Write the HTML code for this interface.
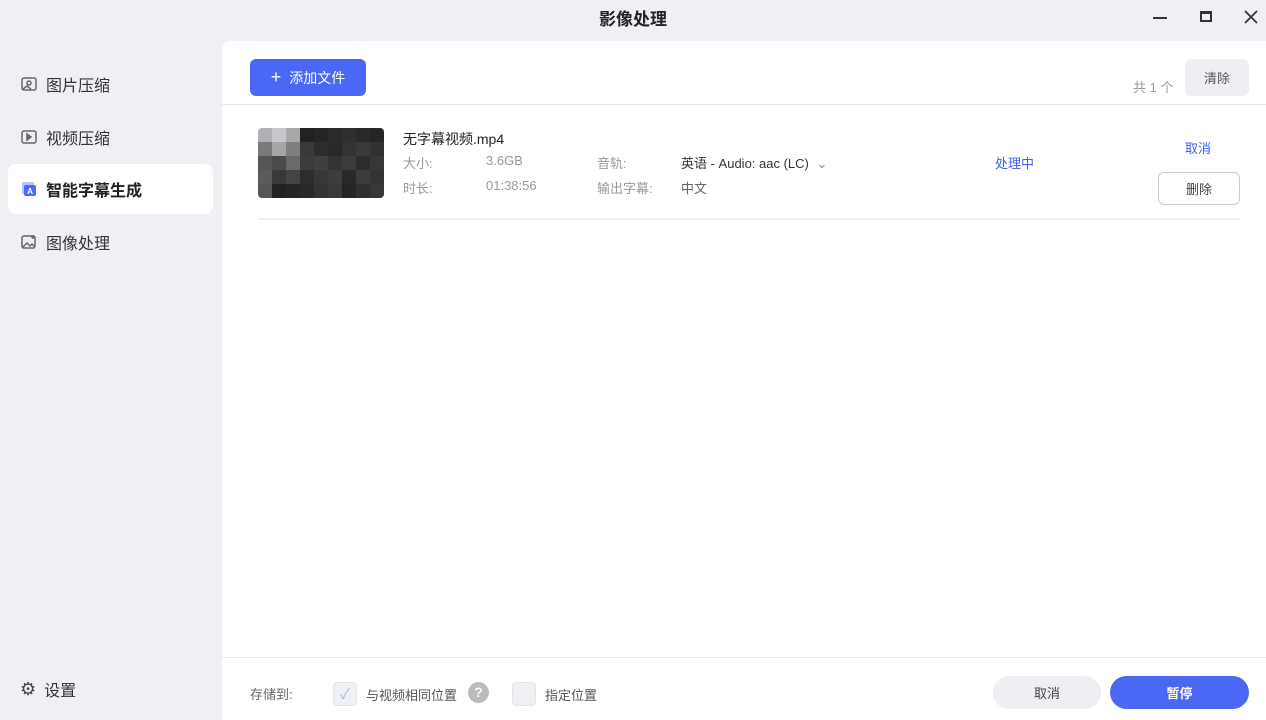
<!DOCTYPE html>
<html><head><meta charset="utf-8"><style>
*{margin:0;padding:0;box-sizing:border-box}
body{width:1266px;height:720px;background:#eff0f4;font-family:"Liberation Sans","Noto Sans CJK SC",sans-serif;position:relative;overflow:hidden;color:#222}
.abs{position:absolute}
.title{top:5px;left:0;width:1266px;text-align:center;font-size:17px;font-weight:bold;color:#222}
.nav{left:20px;font-size:16px;color:#333;display:flex;align-items:center;gap:8px}
.main{left:222px;top:41px;width:1044px;height:679px;background:#fff;border-radius:8px 0 0 0}
.g{color:#999;font-size:13px}
.d{color:#333;font-size:13px}
.btn{border-radius:6px;font-size:13px;display:flex;align-items:center;justify-content:center}
.thumb{left:258px;top:128px;width:126px;height:70px;display:grid;grid-template-columns:repeat(9,1fr);grid-template-rows:repeat(5,1fr);border-radius:4px;overflow:hidden}
</style></head><body>
<div class="abs title">影像处理</div>
<div class="abs" style="left:1153px;top:17px;width:14px;height:2px;background:#333"></div>
<div class="abs" style="left:1200px;top:11px;width:12px;height:11px;border:2px solid #333;border-top-width:3px"></div>
<svg class="abs" style="left:1244px;top:10px" width="14" height="14" viewBox="0 0 14 14" stroke="#333" stroke-width="1.8"><path d="M1 1l12 12M13 1L1 13"/></svg>

<div class="abs nav" style="top:72px"><svg width="18" height="18" viewBox="0 0 18 18" fill="none" stroke="#666" stroke-width="1.5"><rect x="2" y="3" width="14" height="12" rx="2"/><circle cx="9" cy="8" r="2"/><path d="M3 14l4-3 4 3"/></svg>图片压缩</div>
<div class="abs nav" style="top:125px"><svg width="18" height="18" viewBox="0 0 18 18" fill="none" stroke="#666" stroke-width="1.5"><rect x="2" y="3" width="14" height="12" rx="2"/><path d="M7 6v6l4-3z" fill="#666"/></svg>视频压缩</div>
<div class="abs" style="left:8px;top:164px;width:205px;height:50px;background:#fff;border-radius:8px"></div>
<div class="abs nav" style="top:177px;font-weight:bold;color:#222"><svg width="18" height="18" viewBox="0 0 18 18"><rect x="2" y="2" width="12" height="12" rx="2" fill="#b8c4f8"/><rect x="4" y="5" width="12" height="11" rx="2" fill="#4d6af5"/><text x="10" y="14" font-size="8" fill="#fff" text-anchor="middle" font-family="Liberation Sans">A</text></svg>智能字幕生成</div>
<div class="abs nav" style="top:230px"><svg width="18" height="18" viewBox="0 0 18 18" fill="none" stroke="#666" stroke-width="1.5"><rect x="2" y="3" width="13" height="12" rx="2"/><path d="M3 14l4-4 3 3 2-2 3 3"/><path d="M13 2v4M11 4h4"/></svg>图像处理</div>
<div class="abs nav" style="top:677px"><span style="font-size:18px;color:#444">⚙</span>设置</div>

<div class="abs main"></div>
<div class="abs btn" style="left:250px;top:59px;width:116px;height:37px;background:#4a67f5;color:#fff;font-size:14px"><span style="font-size:18px;margin-right:8px">+</span>添加文件</div>
<div class="abs g" style="left:1133px;top:77px">共 1 个</div>
<div class="abs btn" style="left:1185px;top:59px;width:64px;height:37px;background:#eeeff2;color:#555">清除</div>
<div class="abs" style="left:222px;top:104px;width:1044px;height:1px;background:#e8e8ec"></div>

<div class="abs thumb">
<i style="background:#b0b0b4"></i><i style="background:#c8c8cc"></i><i style="background:#a8a8aa"></i><i style="background:#222"></i><i style="background:#262424"></i><i style="background:#2c2a2a"></i><i style="background:#302e2e"></i><i style="background:#2a2828"></i><i style="background:#262424"></i>
<i style="background:#7a7a7c"></i><i style="background:#a6a6a8"></i><i style="background:#7e7e80"></i><i style="background:#3a3838"></i><i style="background:#2e2c2c"></i><i style="background:#2a2828"></i><i style="background:#343232"></i><i style="background:#3a3838"></i><i style="background:#323030"></i>
<i style="background:#555"></i><i style="background:#4a4a4a"></i><i style="background:#6a6a6a"></i><i style="background:#3c3a3a"></i><i style="background:#403e3e"></i><i style="background:#343232"></i><i style="background:#3c3a3a"></i><i style="background:#2e2c2c"></i><i style="background:#383636"></i>
<i style="background:#5a5a5a"></i><i style="background:#3a3838"></i><i style="background:#444"></i><i style="background:#2e2c2c"></i><i style="background:#383636"></i><i style="background:#3e3c3c"></i><i style="background:#2a2828"></i><i style="background:#3c3a3a"></i><i style="background:#343232"></i>
<i style="background:#555"></i><i style="background:#222"></i><i style="background:#262424"></i><i style="background:#2a2828"></i><i style="background:#343232"></i><i style="background:#3a3838"></i><i style="background:#262424"></i><i style="background:#302e2e"></i><i style="background:#383636"></i>
</div>
<div class="abs" style="left:403px;top:129px;font-size:14px;color:#222">无字幕视频.mp4</div>
<div class="abs g" style="left:403px;top:153px">大小:</div>
<div class="abs g" style="left:486px;top:153px">3.6GB</div>
<div class="abs g" style="left:597px;top:153px">音轨:</div>
<div class="abs d" style="left:681px;top:153px">英语 - Audio: aac (LC) <span style="color:#888;margin-left:4px">⌄</span></div>
<div class="abs g" style="left:403px;top:178px">时长:</div>
<div class="abs g" style="left:486px;top:178px">01:38:56</div>
<div class="abs g" style="left:597px;top:178px">输出字幕:</div>
<div class="abs d" style="left:681px;top:178px;color:#666">中文</div>
<div class="abs" style="left:995px;top:153px;font-size:13px;color:#3d5ef0">处理中</div>
<div class="abs" style="left:1185px;top:138px;font-size:13px;color:#3d5ef0">取消</div>
<div class="abs btn" style="left:1158px;top:172px;width:82px;height:33px;border:1px solid #ccc;color:#444">删除</div>
<div class="abs" style="left:258px;top:218px;width:982px;height:2px;background:#f0f0f2"></div>

<div class="abs" style="left:222px;top:657px;width:1044px;height:1px;background:#e8e8ec"></div>
<div class="abs g" style="left:250px;top:684px;color:#666">存储到:</div>
<div class="abs" style="left:333px;top:682px;width:24px;height:24px;border-radius:4px;background:#eef0f4;border:1px solid #e2e4e8;color:#a8b4e6;font-size:14px;text-align:center;line-height:22px">✓</div>
<div class="abs d" style="left:366px;top:685px;color:#555">与视频相同位置</div>
<div class="abs" style="left:468px;top:682px;width:21px;height:21px;border-radius:50%;background:#bbb;color:#fff;font-size:14px;font-weight:bold;text-align:center;line-height:21px">?</div>
<div class="abs" style="left:512px;top:682px;width:24px;height:24px;border-radius:4px;background:#eef0f4;border:1px solid #e2e4e8"></div>
<div class="abs d" style="left:545px;top:685px;color:#555">指定位置</div>
<div class="abs btn" style="left:993px;top:676px;width:108px;height:33px;border-radius:17px;background:#eeeff2;color:#444">取消</div>
<div class="abs btn" style="left:1110px;top:676px;width:139px;height:33px;border-radius:17px;background:#4a67f5;color:#fff;font-weight:bold">暂停</div>
</body></html>
